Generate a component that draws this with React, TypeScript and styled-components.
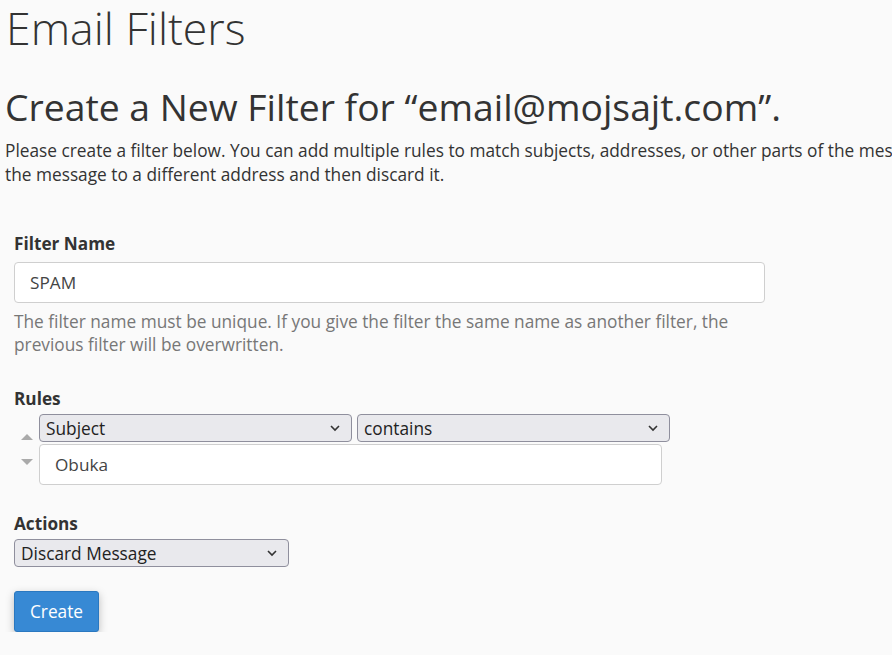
import styled, { createGlobalStyle } from "styled-components";

const GlobalStyle = createGlobalStyle`
  html, body {
    margin: 0;
    padding: 0;
    background: #fafafa;
    overflow: hidden;
  }
  body {
    font-family: "Open Sans", "DejaVu Sans", sans-serif;
    color: #333;
  }
`;

const Page = styled.div`
  padding: 0 5px;
  width: 892px;
  box-sizing: border-box;
  overflow: hidden;
`;

const Title = styled.h1`
  font-size: 44.6px;
  font-weight: 300;
  line-height: 56px;
  margin: 0;
  padding-left: 1px;
`;

const SubTitle = styled.h2`
  font-size: 37.3px;
  font-weight: 400;
  line-height: 48px;
  margin: 27px 0 8px;
`;

const Intro = styled.p`
  font-size: 17.3px;
  line-height: 24px;
  margin: 0;
  white-space: nowrap;
`;

const Form = styled.form`
  padding: 46px 9px 0;
  display: flex;
  flex-direction: column;
`;

const Group = styled.div<{ $gap?: number }>`
  display: flex;
  flex-direction: column;
  margin-bottom: ${(p) => p.$gap ?? 0}px;
`;

const Label = styled.label<{ $space?: number }>`
  font-size: 17.2px;
  font-weight: 700;
  line-height: 22px;
  margin-bottom: ${(p) => p.$space ?? 5}px;
`;

const TextInput = styled.input<{ $width: number }>`
  box-sizing: border-box;
  width: ${(p) => p.$width}px;
  height: 41px;
  padding: 0 15px;
  border: 1px solid #cfcfcf;
  border-radius: 4px;
  background: #fff;
  font-family: inherit;
  font-size: 17.2px;
  color: #444;
  outline: none;
`;

const Help = styled.p`
  font-size: 17.3px;
  line-height: 23px;
  color: #777;
  margin: 7px 0 0;
  width: 735px;
`;

const Select = styled.div<{ $width: number }>`
  box-sizing: border-box;
  width: ${(p) => p.$width}px;
  height: 28px;
  padding: 0 10px 0 6px;
  border: 1px solid #8f8f9d;
  border-radius: 4px;
  background: #e9e9ed;
  display: flex;
  align-items: center;
  justify-content: space-between;
  font-size: 17.3px;
  color: #222;
`;

const RuleRow = styled.div`
  display: flex;
  align-items: flex-start;
`;

const Sorter = styled.div`
  width: 25px;
  display: flex;
  flex-direction: column;
  align-items: center;
  gap: 19px;
  padding-top: 20px;
`;

const Arrow = styled.span<{ $up?: boolean }>`
  width: 0;
  height: 0;
  border-left: 6px solid transparent;
  border-right: 6px solid transparent;
  ${(p) =>
    p.$up ? "border-bottom: 6px solid #aaa;" : "border-top: 6px solid #aaa;"}
`;

const RuleFields = styled.div`
  display: flex;
  flex-direction: column;
  gap: 2px;
`;

const SelectPair = styled.div`
  display: flex;
  gap: 5px;
`;

const Button = styled.button`
  align-self: flex-start;
  box-sizing: border-box;
  width: 85px;
  height: 41px;
  padding: 0;
  border: 1px solid #2a78c0;
  border-radius: 3px;
  background: #3789d4;
  color: #fff;
  font-family: inherit;
  font-size: 17.3px;
  box-shadow: 0 3px 8px rgba(0, 0, 0, 0.25);
`;

const Chevron = () => (
  <svg width="12" height="12" viewBox="0 0 12 12">
    <path d="M2 4 L6 8 L10 4" fill="none" stroke="#333" strokeWidth="1.6" />
  </svg>
);

const Dropdown = ({ width, value }: { width: number; value: string }) => (
  <Select $width={width}>
    <span>{value}</span>
    <Chevron />
  </Select>
);

export default function App() {
  return (
    <Page>
      <GlobalStyle />
      <Title>Email Filters</Title>
      <SubTitle>Create a New Filter for “email@mojsajt.com”.</SubTitle>
      <Intro>
        Please create a filter below. You can add multiple rules to match
        subjects, addresses, or other parts of the message. You can then add
        multiple actions to take on a message such as to deliver
        <br />
        the message to a different address and then discard it.
      </Intro>
      <Form>
        <Group $gap={32}>
          <Label $space={7}>Filter Name</Label>
          <TextInput $width={751} defaultValue="SPAM" />
          <Help>
            The filter name must be unique. If you give the filter the same
            name as another filter, the previous filter will be overwritten.
          </Help>
        </Group>
        <Group $gap={28}>
          <Label $space={4}>Rules</Label>
          <RuleRow>
            <Sorter>
              <Arrow $up />
              <Arrow />
            </Sorter>
            <RuleFields>
              <SelectPair>
                <Dropdown width={313} value="Subject" />
                <Dropdown width={313} value="contains" />
              </SelectPair>
              <TextInput $width={623} defaultValue="Obuka" />
            </RuleFields>
          </RuleRow>
        </Group>
        <Group $gap={24}>
          <Label $space={4}>Actions</Label>
          <Dropdown width={275} value="Discard Message" />
        </Group>
        <Button type="button">Create</Button>
      </Form>
    </Page>
  );
}
